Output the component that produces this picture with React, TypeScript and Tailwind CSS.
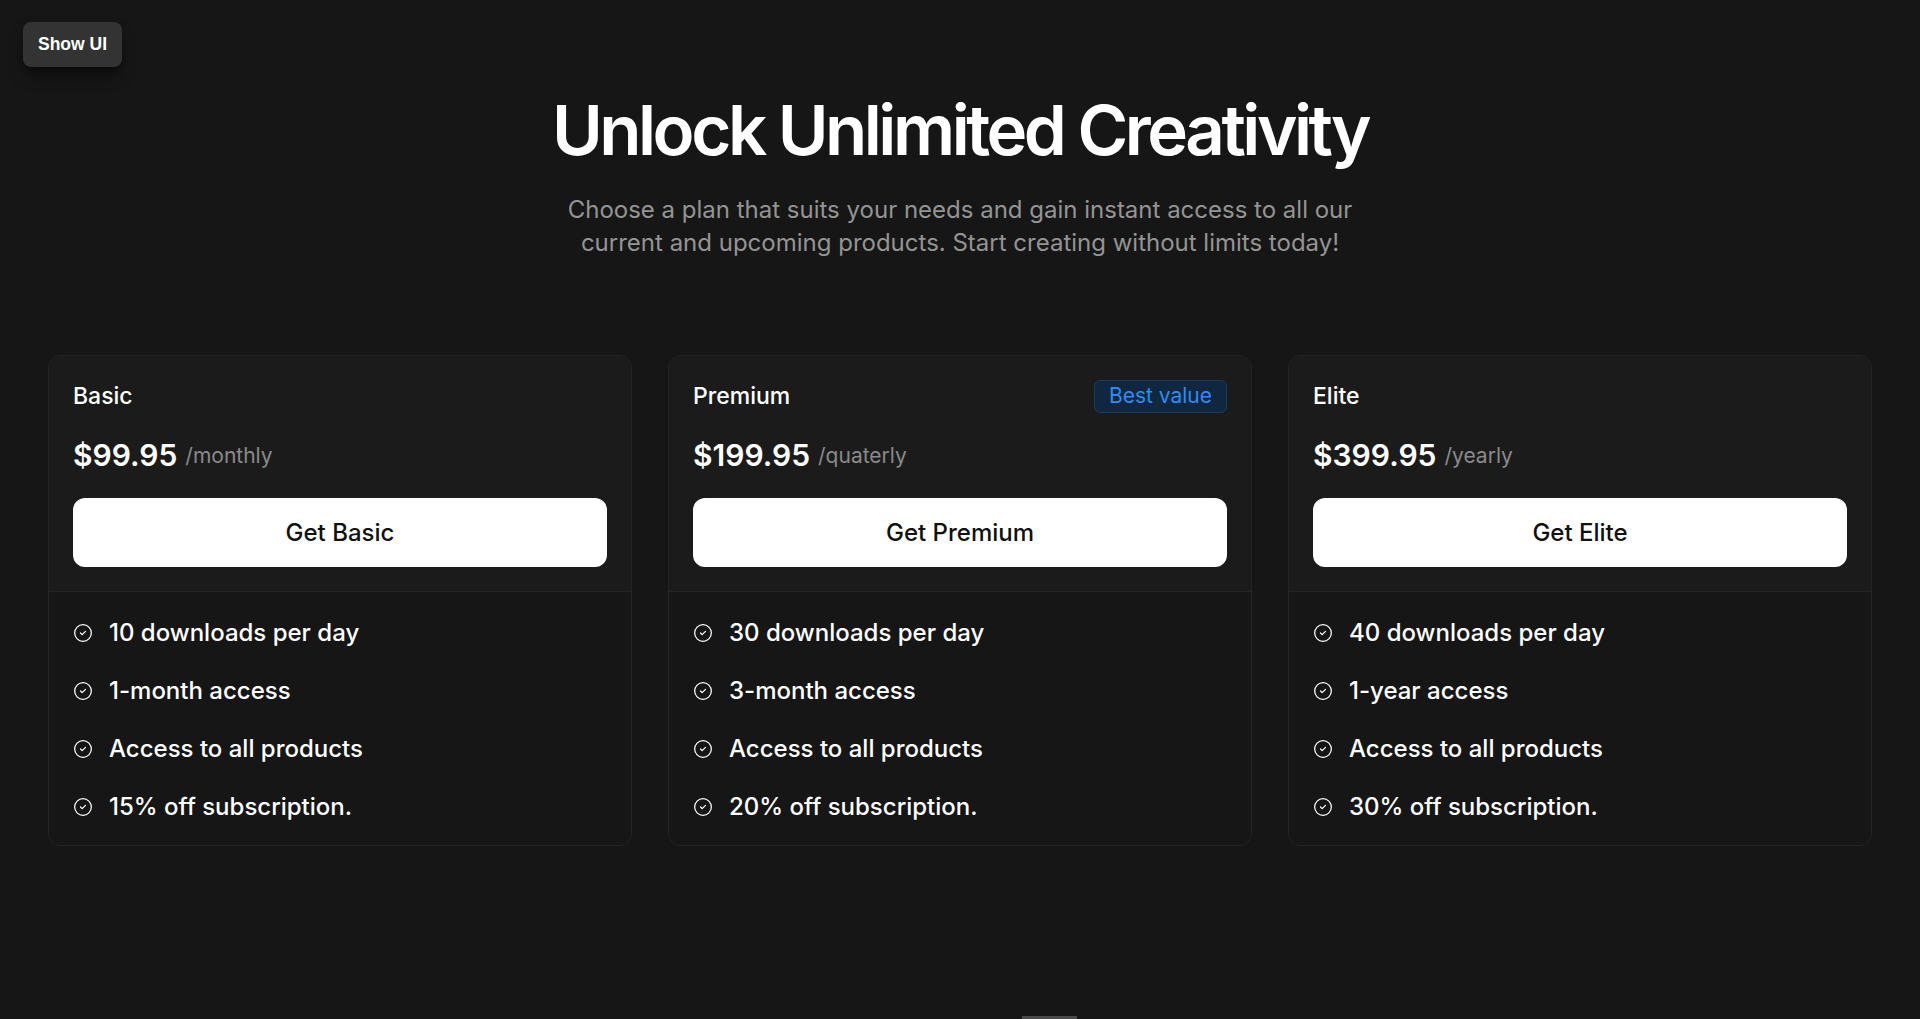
import { CircleCheck } from 'lucide-react'

const plans = [
  {
    name: 'Basic',
    price: '$99.95',
    period: '/monthly',
    cta: 'Get Basic',
    features: ['10 downloads per day', '1-month access', 'Access to all products', '15% off subscription.'],
  },
  {
    name: 'Premium',
    price: '$199.95',
    period: '/quaterly',
    cta: 'Get Premium',
    badge: 'Best value',
    features: ['30 downloads per day', '3-month access', 'Access to all products', '20% off subscription.'],
  },
  {
    name: 'Elite',
    price: '$399.95',
    period: '/yearly',
    cta: 'Get Elite',
    features: ['40 downloads per day', '1-year access', 'Access to all products', '30% off subscription.'],
  },
]

function PlanCard({ plan }: { plan: (typeof plans)[number] }) {
  return (
    <div className="flex flex-col rounded-xl border border-[#232323] bg-[#161616] overflow-hidden">
      {/* Header */}
      <div className="bg-[#1b1b1b] border-b border-[#232323] px-6 pt-6 pb-6">
        <div className="flex items-center justify-between h-8">
          <h3 className="text-[23px] font-medium text-white leading-8">{plan.name}</h3>
          {plan.badge && (
            <span className="px-3.5 h-[33px] flex items-center rounded-md border border-[#1d3a5c] bg-[#0f2741] text-[21px] text-[#2f8cf0]">
              {plan.badge}
            </span>
          )}
        </div>
        <div className="mt-[21px] flex items-center gap-2">
          <span className="text-[30px] leading-[45px] font-semibold text-white">{plan.price}</span>
          <span className="text-[21px] leading-[32px] text-[#8a8a8a]">{plan.period}</span>
        </div>
        <button className="mt-5 w-full h-[69px] rounded-xl bg-white text-[#111] text-[24px] font-medium">
          {plan.cta}
        </button>
      </div>

      {/* Features */}
      <ul className="px-6 pt-[26px] pb-[23px] flex flex-col gap-[28px]">
        {plan.features.map((f) => (
          <li key={f} className="flex items-center gap-4 text-[24px] font-medium text-white leading-[30px]">
            <CircleCheck className="w-5 h-5 shrink-0 text-white" strokeWidth={1.5} />
            {f}
          </li>
        ))}
      </ul>
    </div>
  )
}

export default function App() {
  return (
    <div className="relative min-h-screen bg-[#161616] font-['Inter',sans-serif]">
      <button className="absolute left-[23px] top-[22px] h-[45px] px-[15px] rounded-lg bg-[#333333] shadow-lg shadow-black/50 text-white text-[17.5px] font-bold font-['Liberation_Sans',Arial,sans-serif]">
        Show UI
      </button>

      <div className="flex flex-col items-center pt-[96px]">
        <h1 className="text-[69px] font-semibold tracking-[-0.05em] text-white leading-none">
          Unlock Unlimited Creativity
        </h1>
        <p className="mt-[28px] text-center text-[24px] leading-[33px] text-[#949494]">
          Choose a plan that suits your needs and gain instant access to all our
          <br />
          current and upcoming products. Start creating without limits today!
        </p>
      </div>

      <div className="grid grid-cols-3 gap-9 px-12 mt-[96px]">
        {plans.map((p) => (
          <PlanCard key={p.name} plan={p} />
        ))}
      </div>

      <div className="fixed bottom-0 left-[1022px] w-[55px] h-[3px] bg-[#4a4a4a]" />
    </div>
  )
}
